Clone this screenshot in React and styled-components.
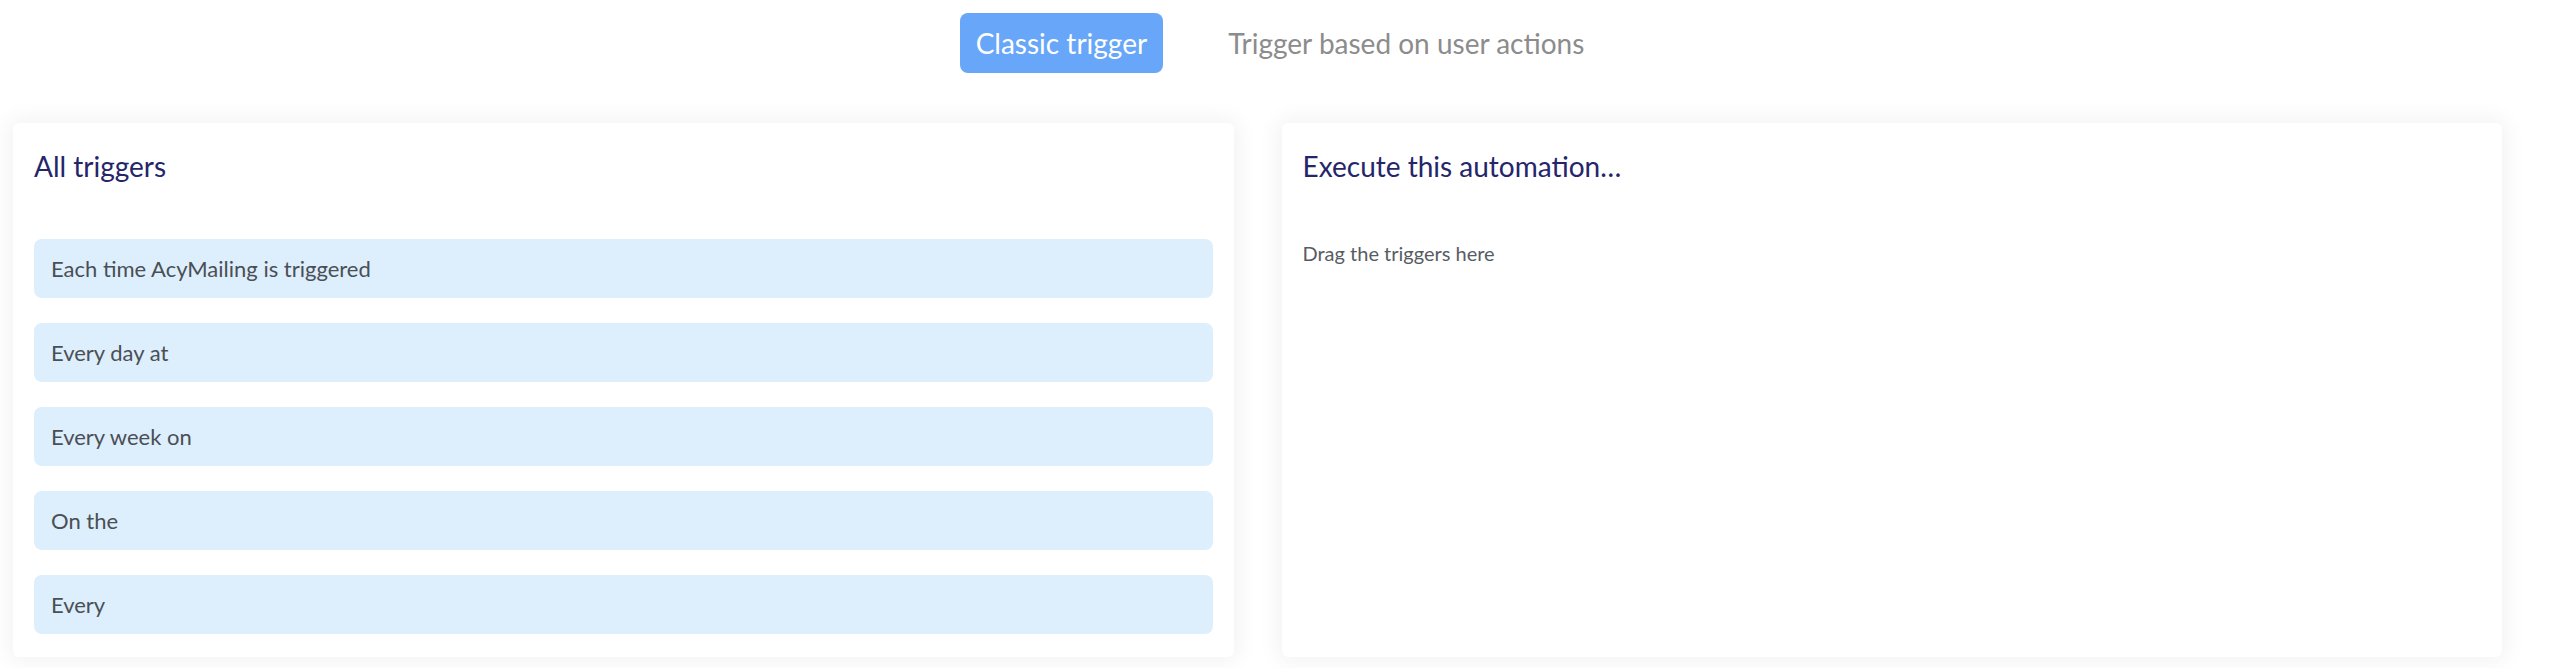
import React, { useState } from 'react';
import styled, { createGlobalStyle } from 'styled-components';

const GlobalStyle = createGlobalStyle`
  html, body {
    margin: 0;
    padding: 0;
    background: #ffffff;
    font-family: 'Lato', 'Noto Sans', sans-serif;
  }
`;

const Page = styled.div`
  width: 2552px;
  height: 668px;
  overflow: hidden;
  box-sizing: border-box;
  padding-top: 13px;
`;

const Tabs = styled.div`
  display: flex;
  justify-content: center;
  gap: 49px;
  padding-left: 8px;
  margin-bottom: 50px;
`;

const Tab = styled.button`
  height: 60px;
  padding: 0 16px;
  border: none;
  border-radius: 8px;
  font-family: inherit;
  font-size: 28px;
  font-weight: 400;
  cursor: pointer;
  background: ${({ active }) => (active ? '#67a6f8' : 'transparent')};
  color: ${({ active }) => (active ? '#ffffff' : '#8c8c8c')};
`;

const Columns = styled.div`
  display: grid;
  grid-template-columns: 1fr 1fr;
  gap: 48px;
  padding: 0 50px 0 13px;
`;

const Card = styled.div`
  background: #ffffff;
  border-radius: 6px;
  box-shadow: 0 0 22px 4px rgba(0, 0, 0, 0.055);
  height: 534px;
  box-sizing: border-box;
  padding: 26px 21px 22px;
  display: flex;
  flex-direction: column;
`;

const Title = styled.h2`
  margin: 0 0 56px;
  font-size: 28px;
  font-weight: 400;
  line-height: 34px;
  color: #25256a;
`;

const List = styled.div`
  display: flex;
  flex-direction: column;
  gap: 25px;
`;

const Item = styled.div`
  height: 59px;
  box-sizing: border-box;
  padding: 0 17px;
  display: flex;
  align-items: center;
  background: #ddeefc;
  border-radius: 8px;
  font-size: 22px;
  color: #4a4f55;
  cursor: grab;
`;

const Hint = styled.p`
  margin: 2px 0 0;
  font-size: 20px;
  line-height: 24px;
  color: #575c62;
`;

const triggers = [
  'Each time AcyMailing is triggered',
  'Every day at',
  'Every week on',
  'On the',
  'Every',
];

const App = () => {
  const [tab, setTab] = useState('classic');

  return (
    <>
      <GlobalStyle />
      <Page>
        <Tabs>
          <Tab active={tab === 'classic'} onClick={() => setTab('classic')}>
            Classic trigger
          </Tab>
          <Tab active={tab === 'user'} onClick={() => setTab('user')}>
            Trigger based on user actions
          </Tab>
        </Tabs>
        <Columns>
          <Card>
            <Title>All triggers</Title>
            <List>
              {triggers.map((t) => (
                <Item key={t}>{t}</Item>
              ))}
            </List>
          </Card>
          <Card>
            <Title>Execute this automation…</Title>
            <Hint>Drag the triggers here</Hint>
          </Card>
        </Columns>
      </Page>
    </>
  );
};

export default App;
